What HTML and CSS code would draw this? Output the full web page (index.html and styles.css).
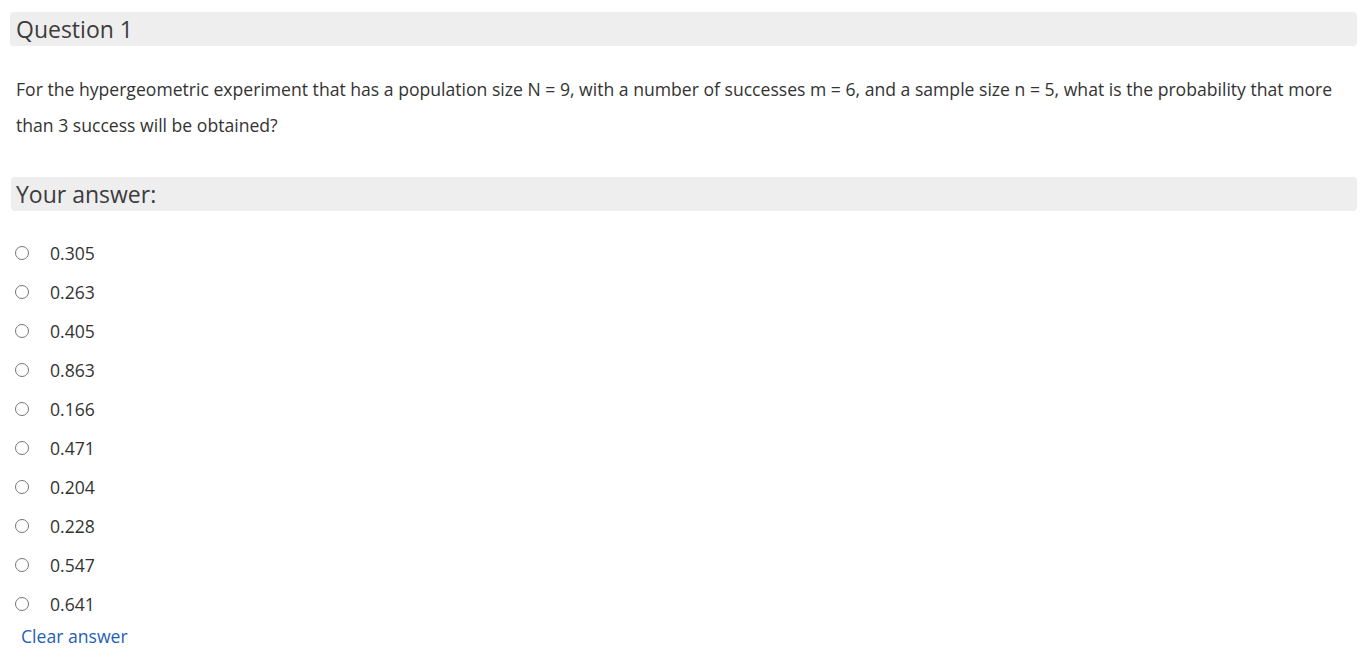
FILE: index.html
```
<!DOCTYPE html>
<html>
<head>
<meta charset="utf-8">
<link rel="stylesheet" href="styles.css">
</head>
<body>
<div class="page">
  <div class="q-head">Question 1</div>
  <p class="q-text">For the hypergeometric experiment that has a population size N = 9, with a number of successes m = 6, and a sample size n = 5, what is the probability that more than 3 success will be obtained?</p>
  <div class="a-head">Your answer:</div>
  <div class="options">
    <label class="opt"><input type="radio" name="q1"><span>0.305</span></label>
    <label class="opt"><input type="radio" name="q1"><span>0.263</span></label>
    <label class="opt"><input type="radio" name="q1"><span>0.405</span></label>
    <label class="opt"><input type="radio" name="q1"><span>0.863</span></label>
    <label class="opt"><input type="radio" name="q1"><span>0.166</span></label>
    <label class="opt"><input type="radio" name="q1"><span>0.471</span></label>
    <label class="opt"><input type="radio" name="q1"><span>0.204</span></label>
    <label class="opt"><input type="radio" name="q1"><span>0.228</span></label>
    <label class="opt"><input type="radio" name="q1"><span>0.547</span></label>
    <label class="opt"><input type="radio" name="q1"><span>0.641</span></label>
  </div>
  <a class="clear" href="#">Clear answer</a>
</div>
</body>
</html>
```
FILE: styles.css
```
html, body {
  margin: 0;
  padding: 0;
  background: #fff;
}
body {
  font-family: "Open Sans", "Liberation Sans", sans-serif;
  color: #333;
}
.page {
  padding: 12px 7px 0 10px;
}
.q-head {
  background: #eee;
  border-radius: 4px;
  height: 34px;
  line-height: 34px;
  font-size: 23px;
  padding-left: 6px;
  color: #3c3c3c;
}
.q-text {
  margin: 25px 0 0 0;
  padding: 0 6px;
  font-size: 17.6px;
  line-height: 36px;
}
.a-head {
  margin: 34px 0 0 1px;
  background: #eee;
  border-radius: 4px;
  height: 34px;
  line-height: 34px;
  font-size: 23px;
  padding-left: 5px;
  color: #3c3c3c;
}
.options {
  margin-top: 22px;
  display: flex;
  flex-direction: column;
}
.opt {
  display: flex;
  align-items: center;
  height: 39px;
  font-size: 17.6px;
}
.opt input {
  appearance: none;
  -webkit-appearance: none;
  box-sizing: border-box;
  margin: 0 0 0 5px;
  width: 14px;
  height: 14px;
  border: 1.4px solid #767676;
  border-radius: 50%;
  background: #fff;
}
.opt span {
  margin-left: 21px;
}
.clear {
  display: inline-block;
  margin: 1px 0 0 11px;
  font-size: 17.6px;
  line-height: 24px;
  color: #1f5fb8;
  text-decoration: none;
}
```
